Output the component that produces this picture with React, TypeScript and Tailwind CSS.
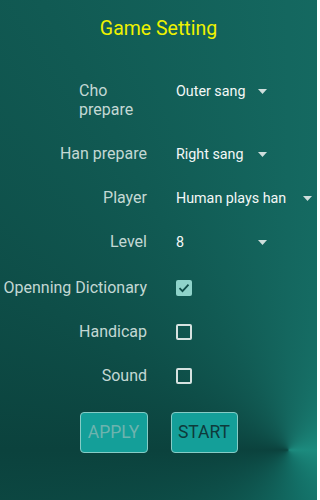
import React from "react";

function Arrow() {
  return (
    <svg width="9" height="5" viewBox="0 0 9 5" className="shrink-0">
      <path d="M0 0h9L4.5 5z" fill="#cfdedc" />
    </svg>
  );
}

function Spinner({ value, wide }: { value: string; wide?: boolean }) {
  return (
    <div
      className={
        wide
          ? "flex items-center gap-[17px] text-[14.3px] text-[#f4f8f7]"
          : "flex w-[91px] items-center justify-between text-[14.3px] text-[#f4f8f7]"
      }
    >
      <span className="leading-5">{value}</span>
      <Arrow />
    </div>
  );
}

function Box({ checked }: { checked?: boolean }) {
  if (checked) {
    return (
      <div className="flex h-[16px] w-[16px] items-center justify-center rounded-[2px] bg-[#8fd3ca]">
        <svg width="12" height="10" viewBox="0 0 12 10">
          <path d="M1.5 5.2l3 3 6-6.5" fill="none" stroke="#0f4d48" strokeWidth="1.8" />
        </svg>
      </div>
    );
  }
  return <div className="h-[16px] w-[16px] rounded-[2px] border-2 border-[#d6e2e0]" />;
}

function Row({ label, children }: { label: string; children: React.ReactNode }) {
  return (
    <div className="flex h-[44px] items-center">
      <div className="w-[147px] shrink-0 text-right text-[16px] leading-5 text-[#c3d8d4]">{label}</div>
      <div className="ml-[29px] flex items-center">{children}</div>
    </div>
  );
}

export default function App() {
  return (
    <div
      className="h-[500px] w-[317px] overflow-hidden bg-[conic-gradient(from_0deg_at_91%_90%,#14675f,#1c8b7e_25%,#137067_45%,#0b423d_75%,#115a53_92%,#14675f)] font-['Roboto',sans-serif]"
    >
      <div className="pt-[17px] text-center text-[19.5px] leading-6 text-[#eef200]">Game Setting</div>

      <div className="mt-[31px] flex h-[60px] items-start pt-[9px]">
        <div className="flex w-[147px] shrink-0 justify-end">
          <div className="ml-[79px] w-[68px] text-left text-[16px] leading-[19px] text-[#c3d8d4]">
            Cho prepare
          </div>
        </div>
        <div className="ml-[29px]">
          <Spinner value="Outer sang" />
        </div>
      </div>

      <Row label="Han prepare">
        <Spinner value="Right sang" />
      </Row>
      <Row label="Player">
        <Spinner value="Human plays han" wide />
      </Row>
      <Row label="Level">
        <Spinner value="8" />
      </Row>
      <div className="mt-[2px]">
        <Row label="Openning Dictionary">
          <Box checked />
        </Row>
      </div>
      <Row label="Handicap">
        <Box />
      </Row>
      <Row label="Sound">
        <Box />
      </Row>

      <div className="mt-[14px] flex justify-center gap-[23px]">
        <button className="h-[41px] w-[68px] rounded-[4px] border-[1.5px] border-[#86ccc6] bg-[#149f99] text-[17.5px] text-[#6db3ae]">
          APPLY
        </button>
        <button className="h-[41px] w-[67px] rounded-[4px] border-[1.5px] border-[#86ccc6] bg-[#149f99] text-[17.5px] text-[#0e3a3b]">
          START
        </button>
      </div>
    </div>
  );
}
